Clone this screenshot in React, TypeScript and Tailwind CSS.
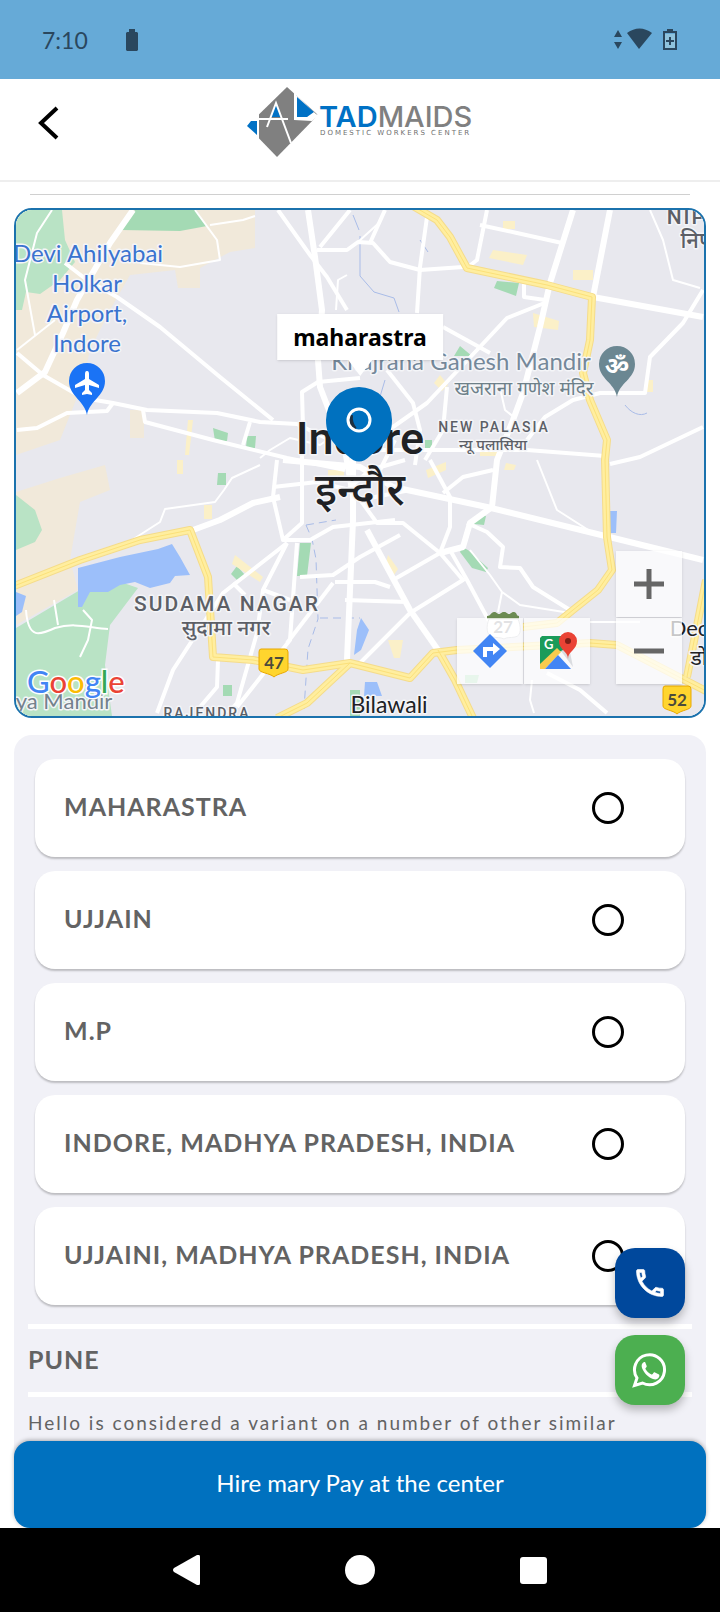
import { useState } from 'react';

const ADDRESSES = [
  'MAHARASTRA',
  'UJJAIN',
  'M.P',
  'INDORE, MADHYA PRADESH, INDIA',
  'UJJAINI, MADHYA PRADESH, INDIA',
];

const MAIN_ROADS = [
  'M133 210 110 243 77 300 63 333 45 372 17 393',
  'M308 210 315 257 322 310 318 360 320 387 330 413 345 450 352 490',
  'M573 210 550 283 540 327 523 393 513 420 497 460 492 507 470 523 463 547 440 553',
  'M610 210 593 297 703 317',
  'M283 460 360 467 393 487 487 507 593 533 703 560',
  'M367 530 410 610 438 650',
  'M353 440V520L347 660',
  'M193 530 220 520 253 503 280 497',
];

const ROADS = [
  'M65 263 87 280 117 297 160 327 220 377 273 420',
  'M17 353 43 375 83 398 113 403 147 410 217 413 260 422 297 424 330 440',
  'M17 430 37 428 67 413 107 411 113 403',
  'M143 410 145 422 213 440 287 458 345 470',
  'M250 422 243 445',
  'M278 210 310 255 327 277 347 310',
  'M350 210 320 247 M317 250H347L358 242 373 243 390 262 420 270 463 267',
  'M303 427 302 392 318 382 360 378',
  'M427 217 420 267 417 313',
  'M487 210 477 260 468 267',
  'M480 225 517 233 562 243',
  'M703 290 683 323 650 357 645 393 600 393 573 400 545 417 527 440',
  'M547 302 507 318 477 350 427 403 393 427 365 450',
  'M443 327 490 353 M524 284V297L545 300',
  'M703 427 640 457 610 464',
  'M447 387 443 430 425 460',
  'M387 370 413 403 420 430 415 465',
  'M360 450H527L605 456',
  'M430 460 450 497V527L440 553',
  'M493 470 463 477 443 493',
  'M360 663 410 613 463 580 440 553 403 523 377 523 353 490',
  'M393 580 440 553 M450 550 467 580 490 623',
  'M467 523 487 532 503 547 500 567 520 568 533 587 570 610',
  'M547 673 580 690 607 713',
  'M335 582H375L390 587 M345 600 407 602',
  'M277 460 273 497 283 540H310L333 527 395 520 M302 430V523L283 540',
  'M273 487 317 482 350 490',
  'M287 543 223 593 197 633 173 670 157 713',
  'M297 543 290 640 237 707',
  'M287 543 263 590 257 633 237 703 228 713',
  'M300 577 333 575 360 557 400 535 M333 583 287 643',
  'M218 660 217 687 200 707 M233 583 245 595',
  'M263 590 290 600 M347 490 370 470 405 460 M360 500 410 490',
  'M385 210 370 243 M335 427 350 455 M395 440 375 480',
];

const LANES = [
  'M52 210 37 233 25 280 35 335 M17 350 55 320',
  'M195 210 217 240 220 260 180 267 140 263 M210 225 243 220 255 216',
  'M347 275 338 280 336 310 M358 242 380 222',
  'M650 210 663 240 673 280 700 288',
  'M537 460 545 480 557 510 593 533',
  'M132 540 160 522 165 509 215 502 224 490 232 478 260 465',
  'M470 550 490 575 502 592 520 605 570 613 M502 592 498 612',
  'M340 405 342 430 320 445 290 438 270 450 260 458',
  'M500 388 505 410 515 418 M590 622H640',
  'M26 610C28 640 40 635 55 628 75 622 90 628 108 629 M54 600 58 625 M83 610 92 620 88 640 80 657',
  'M532 680 530 700 534 713',
];

const HIGHWAYS = [
  'M413 206 437 220 450 237 467 268 547 285 592 297 590 340 583 373 590 400 607 440 605 460 607 537 612 570 598 590 573 610 557 623 523 627',
  'M14 586 80 560 140 540 190 530 208 577 213 657 253 660 303 670 350 663 410 678 433 653 457 650 590 643 617 645 706 691',
  'M438 650 455 680 473 718',
  'M350 663 307 703 277 718',
  'M706 580 687 677',
];

// Drawn in a 688x506 window of the city tile
const CityMap = () => (
  <svg
    className="absolute inset-0 w-full h-full"
    viewBox="16 210 688 506"
    preserveAspectRatio="xMidYMid slice"
    fontFamily="'Noto Sans', 'Noto Sans Devanagari', sans-serif"
    role="img"
    aria-label="Map of Indore"
  >
    <path fill="#e8e8ee" d="M0 190h720v540H0z" />
    <path
      fill="#f1e9da"
      d="M16 210H255V248L230 252 200 268V288H178L175 270 130 275 110 310 90 350 82 385 60 440 16 455z"
    />
    <path fill="#f1e9da" d="M16 492 60 478 105 465 110 490 80 502 70 560 78 590 16 625z" />
    <path fill="#f1e9da" d="M130 410h14v28h-14z" />
    <path
      fill="#b9e3c5"
      d="M16 210H62L65 240 75 262 60 280 40 294 26 292 22 310 16 310zM16 495 35 510 42 530 35 542 16 550zM16 628 80 590 115 580 138 588 110 625 105 665 112 716H16z"
    />
    <path fill="#a4dab4" d="M135 210H196L207 226 180 231 121 230z" />
    <path fill="#f1e9da" d="M65 214H120L105 240 85 260 70 245z" />
    <path
      fill="#a4dab4"
      d="m213 428 15 5-1 8h-12zM247 436h9l-1 12h-9zM300 543h11l-4 33h-10zM237 566l8 9-8 5-6-6zM218 473h8v12h-9zM497 281l22 2-3 13-22-8zM476 515l10 1-2 9-10-1zM462 547l6 3 20 18-2 4-14-4-12-16zM223 685h9v11h-9zM425 440h7v8h-7zM460 346l12 10h-18zM350 690h10v26h-10zM465 675h14l-2 8h-12z"
    />
    <path
      fill="#9cbffa"
      d="M78 568 120 557 158 549 172 544 180 557 190 575 175 576 170 583 150 588 135 582 120 585 108 592 90 592 82 607H78zM16 592l10 4-4 16-6 4zM610 511h7l-1 22h-6zM361 618l8 12-8 20-7 5 3-25zM365 682h12l5 14h-18z"
    />
    <path
      fill="#fbf0c8"
      d="M493 250l34 5-4 10-34-7zM573 270h20v10h-20zM533 313l26 8-1 9-24-3zM503 221h12v8h-12zM188 420h5l-4 35h-4zM177 460h6v14h-6zM204 505h8v14h-8zM235 555l28 22-3 5-28-18zM388 555l10 14-4 6-8-12zM388 640h15l-3 18h-6zM440 375l8 10-6 6-8-8zM506 463l10 2-2 5h-10zM645 380h8v12h-8zM480 450h18v6h-18zM426 470l20-8v8l-18 8zM328 470h16v6h-16z"
    />
    <g fill="none" stroke="#a9bce8" strokeWidth="1">
      <path d="M360 236v40l14 16 20 6 5 14M353 215l6 15M420 240l8 12M385 380l-6 20M625 405c6 8 15 12 22 8" />
      <path strokeDasharray="8 5" d="M306 525l30-5M306 525l6 14 4 20 2 60-10 30-4 60M320 618h40" />
    </g>
    <g fill="none" stroke="#fff" strokeLinejoin="round">
      {LANES.map(d => <path key={d} d={d} strokeWidth="2" />)}
      {ROADS.map(d => <path key={d} d={d} strokeWidth="4" />)}
      {MAIN_ROADS.map(d => <path key={d} d={d} strokeWidth="6" />)}
    </g>
    <g fill="none" strokeLinejoin="round">
      {HIGHWAYS.map(d => <path key={d} d={d} stroke="#f5dc8a" strokeWidth="8" />)}
      {HIGHWAYS.map(d => <path key={d} d={d} stroke="#ffee9f" strokeWidth="6" />)}
      {HIGHWAYS.map(d => <path key={d} d={d} stroke="#fbe07a" strokeWidth="1" />)}
    </g>

    {/* Places */}
    <g textAnchor="middle" stroke="#f4f5f8" strokeWidth="3" strokeLinejoin="round" paintOrder="stroke">
      <g fill="#3a73cf" fontFamily="Lato, sans-serif" fontSize="24">
        <text x="88" y="262">Devi Ahilyabai</text>
        <text x="87" y="292">Holkar</text>
        <text x="87" y="322">Airport,</text>
        <text x="87" y="352">Indore</text>
      </g>
      <text x="461" y="370" fill="#74889a" fontFamily="Lato, sans-serif" fontSize="24">Khajrana Ganesh Mandir</text>
      <text x="524" y="395" fill="#6d8089" fontSize="19">खजराना गणेश मंदिर</text>
      <g fill="#5c5f66" fontWeight="500">
        <text x="494" y="432" fontFamily="Roboto, sans-serif" fontSize="14" letterSpacing="2">NEW PALASIA</text>
        <text x="493" y="450" fontSize="15">न्यू पलासिया</text>
        <text x="227" y="611" fontFamily="Roboto, sans-serif" fontSize="21" letterSpacing="2">SUDAMA NAGAR</text>
        <text x="226" y="635" fontSize="21">सुदामा नगर</text>
        <text x="207" y="718" fontFamily="Roboto, sans-serif" fontSize="14" letterSpacing="2">RAJENDRA</text>
        <text x="694" y="224" fontFamily="Roboto, sans-serif" fontSize="21" letterSpacing="2">NIPA</text>
        <text x="699" y="248" fontSize="22">निपा</text>
      </g>
      <g fill="#202124">
        <text x="360" y="454" fontFamily="Roboto, sans-serif" fontSize="45" fontWeight="500">Indore</text>
        <text x="360" y="505" fontSize="44" fontWeight="500">इन्दौर</text>
        <text x="389" y="713" fontFamily="Lato, sans-serif" fontSize="23">Bilawali</text>
        <text x="690" y="636" fontFamily="Lato, sans-serif" fontSize="22">Deo</text>
        <text x="706" y="665" fontSize="21">डोल</text>
      </g>
      <text x="64" y="709" fill="#73818c" fontFamily="Lato, sans-serif" fontSize="22">ya Mandir</text>
    </g>

    {/* Airport pin */}
    <path fill="#1a73f5" d="M87 415c-2-14-18-19-18-34a18 18 0 0 1 36 0c0 15-16 20-18 34z" />
    <path fill="#fff" d="M87 371c2 0 2 2 2 4v4l10 6v3l-10-3v5l3 3v2l-5-1-5 1v-2l3-3v-5l-10 3v-3l10-6v-4c0-2 0-4 2-4z" />

    {/* Temple pin */}
    <path fill="#6b8792" d="M617 397c-2-14-18-18-18-33a18 18 0 0 1 36 0c0 15-16 19-18 33z" />
    <text x="617" y="374" textAnchor="middle" fill="#fff" fontSize="24" fontWeight="700">ॐ</text>

    {/* Road shields */}
    <g stroke="#e9a800" strokeWidth="1">
      <path fill="#ffd52e" d="M261 649h24q3 0 3 3v17c0 4-10 4-14 8-4-4-15-4-15-8v-17q0-3 2-3z" />
      <path fill="#ffd52e" d="M665 686h23q3 0 3 3v17c0 4-10 4-14 8-4-4-14-4-14-8v-17q0-3 2-3z" />
    </g>
    <path fill="#fff" stroke="#b9bcc2" d="M489 619h29c3 7 4 17-3 18-5 1-8 0-11 2-4-2-7-1-11-2-7-1-7-11-4-18z" />
    <path fill="#6b8b52" d="M487 616c4 0 4-4 7-4s3 2 5 2 2-2 5-2 3 2 5 2 2-2 5-2 2 4 5 4v3h-32z" />
    <g textAnchor="middle" fontFamily="Lato, sans-serif" fontWeight="700" fontSize="17">
      <text x="274" y="669" fill="#4b4b3c">47</text>
      <text x="677" y="706" fill="#4b4b3c">52</text>
      <text x="503" y="633" fill="#8a8d92">27</text>
    </g>

    <text x="27" y="693" fontFamily="Lato, sans-serif" fontSize="31" fontWeight="500" stroke="#fff" strokeWidth="3" paintOrder="stroke">
      <tspan fill="#4285f4">G</tspan>
      <tspan fill="#ea4335">o</tspan>
      <tspan fill="#fbbc05">o</tspan>
      <tspan fill="#4285f4">g</tspan>
      <tspan fill="#34a853">l</tspan>
      <tspan fill="#ea4335">e</tspan>
    </text>

    {/* Selected location */}
    <path fill="#0071bf" d="M359 387a33 33 0 0 1 33 33c0 19-11 27-22 36q-11 11-22 0c-11-9-22-17-22-36a33 33 0 0 1 33-33z" />
    <path fill="none" stroke="#1c2f40" strokeWidth="4" d="M351 415q-1 8 4 14" />
    <circle cx="359" cy="420" r="11" fill="none" stroke="#fff" strokeWidth="3" />
  </svg>
);

const Logo = () => (
  <svg className="w-[260px] h-[90px]" viewBox="0 0 260 90" role="img" aria-label="Tadmaids">
    <path fill="#808080" d="M57 8 88 36 47 78 17 47z" />
    <path fill="#fff" d="M64 14 88 37 82 42 64 41zM15 47 29 34V60z" />
    <path fill="#0071c5" d="M67 18 84 33 77 38H67zM17 47 21 42H27V56zM40 38 46 26 51 38z" />
    <path fill="none" stroke="#fff" strokeWidth="2" d="M65 6V40H80L88 36M18 40H58M37 48 46 24 61 64M28 40V60" />
    <g fontFamily="Inter, sans-serif" fontSize="29">
      <text x="89" y="48" fontWeight="600" fill="#0071c5">
        TAD
        <tspan fill="#808080" fontWeight="500">MAIDS</tspan>
      </text>
    </g>
    <text x="90" y="56" fontFamily="'DejaVu Sans', sans-serif" fontSize="7" letterSpacing="2" fill="#707070">
      DOMESTIC WORKERS CENTER
    </text>
  </svg>
);

const StatusBar = () => (
  <div className="h-[79px] shrink-0 bg-[#66aad7] text-[#2a475e] px-[42px] flex items-center justify-between">
    <div className="flex items-center gap-[38px]">
      <span className="text-[23px] leading-8">7:10</span>
      <svg className="w-3 h-[22px]" viewBox="0 0 12 22" fill="currentColor">
        <path d="M3 0h6v3h2l1 1v17l-1 1H1l-1-1V4l1-1h2z" />
      </svg>
    </div>
    <svg className="w-[65px] h-6" viewBox="0 0 65 24" fill="currentColor">
      <path d="M5 2l4 7H1zM5 21l4-7H1z" />
      <path d="M14 5c8-6 17-6 25 0L26 21z" />
      <path fill="#8fc3dd" d="M52 6h10v14H52z" />
      <path fillRule="evenodd" d="M54 1h6v2h4v19H50V3h4zM52 5v15h10V5z" />
      <path d="M56 9h2v3h3v2h-3v3h-2v-3h-3v-2h3z" />
    </svg>
  </div>
);

const mapButton = 'w-[66px] h-[66px] bg-white/75 shadow-sm flex items-center justify-center';

export default function App() {
  const [selected, setSelected] = useState('');

  return (
    <div className="h-screen flex flex-col bg-white overflow-hidden font-['Lato','Noto_Sans',sans-serif]">
      <StatusBar />

      <header className="h-[103px] shrink-0 border-b-2 border-[#eeeeee] grid grid-cols-[1fr_260px_1fr] items-start">
        <button aria-label="Back" className="ml-[35px] mt-6 w-10 h-10">
          <svg className="w-10 h-10" viewBox="0 0 40 40" fill="none" stroke="#000" strokeWidth="4">
            <path d="M22 5 6 20l16 15" />
          </svg>
        </button>
        <Logo />
      </header>

      <main className="flex-1 min-h-0 overflow-hidden px-[14px]">
        <hr className="mx-4 mt-3 border-[#d0d0d0]" />

        {/* Map */}
        <section className="relative mt-[13px] h-[510px] rounded-[18px] border-2 border-[#1b72ad] overflow-hidden">
          <CityMap />
          <div className="absolute top-[104px] left-1/2 -translate-x-1/2 flex flex-col items-center">
            <div className="h-[46px] px-4 bg-white shadow flex items-center font-['Noto_Sans',sans-serif] font-bold text-[23px] text-black">
              maharastra
            </div>
            <svg className="w-6 h-4" viewBox="0 0 24 16" fill="#fff">
              <path d="M0 0h24L12 16z" />
            </svg>
          </div>
          <div className="absolute right-[22px] bottom-8 flex items-end gap-[26px]">
            <div className="flex gap-[1px]">
              <button aria-label="Directions" className={mapButton}>
                <svg className="w-9 h-9" viewBox="0 0 36 36">
                  <path fill="#4285f4" d="M18 1 35 18 18 35 1 18z" />
                  <path fill="#fff" d="M11 24V14h10v-4l7 6-7 6v-4h-6v6z" />
                </svg>
              </button>
              <button aria-label="Open in Google Maps" className={mapButton}>
                <svg className="w-10 h-10" viewBox="0 0 40 40">
                  <path fill="#1a9b5a" d="M5 5h27v16L20 20 3 35V7z" />
                  <path fill="#f7cb4d" d="M3 33 20 17l4 4L8 38H3z" />
                  <path fill="#4285f4" d="M8 38 21 24 34 38z" />
                  <path fill="#dadce0" d="M24 20 32 16l4 20z" />
                  <path fill="#ea4335" d="M31 28c0-8-9-9-9-18a9 9 0 0 1 18 0c0 9-9 10-9 18z" />
                  <circle cx="31" cy="10" r="3" fill="#7e1f16" />
                  <text x="7" y="18" fill="#fff" fontFamily="Lato, sans-serif" fontSize="13" fontWeight="700">G</text>
                </svg>
              </button>
            </div>
            <div className="flex flex-col gap-[1px]">
              <button aria-label="Zoom in" className={mapButton}>
                <svg className="w-[30px] h-[30px]" viewBox="0 0 30 30" stroke="#666" strokeWidth="5">
                  <path d="M0 15h30M15 0v30" />
                </svg>
              </button>
              <button aria-label="Zoom out" className={mapButton}>
                <svg className="w-[30px] h-[30px]" viewBox="0 0 30 30" stroke="#666" strokeWidth="5">
                  <path d="M0 15h30" />
                </svg>
              </button>
            </div>
          </div>
        </section>

        {/* Addresses */}
        <section className="mt-[17px] rounded-t-[18px] bg-[#f1f1f7] pt-6 pb-10 px-[14px] text-[#636363]">
          <div className="flex flex-col gap-[14px] px-[7px]">
            {ADDRESSES.map(address => (
              <label
                key={address}
                className="h-[98px] rounded-[20px] bg-white shadow-[0_2px_2px_rgba(0,0,0,0.22)] pl-[29px] pr-[61px] flex items-center justify-between"
              >
                <span className="pb-1 text-[25px] leading-8 font-bold tracking-[1px]">{address}</span>
                <input
                  type="radio"
                  name="address"
                  value={address}
                  checked={selected === address}
                  onChange={() => setSelected(address)}
                  className="appearance-none w-8 h-8 rounded-full border-[3px] border-black checked:border-[10px]"
                />
              </label>
            ))}
          </div>
          <h2 className="mt-[19px] h-[73px] border-y-[5px] border-white pb-1 flex items-center text-[25px] leading-8 font-bold tracking-[1px]">
            PUNE
          </h2>
          <p className="mt-3 text-[19px] leading-7 tracking-[2px]">
            Hello is considered a variant on a number of other similar
          </p>
        </section>
      </main>

      <footer className="relative shrink-0 -mt-4">
        <div className="px-[14px]">
          <button className="w-full h-[87px] rounded-2xl bg-[#0071bf] text-white pb-1 text-[24px] leading-8 shadow-[0_-1px_4px_rgba(0,0,0,0.3)]">
            Hire mary Pay at the center
          </button>
        </div>
        <div className="absolute right-[35px] bottom-[207px] flex flex-col gap-[17px] text-white">
          <button
            aria-label="Call"
            className="w-[70px] h-[70px] rounded-[20px] bg-[#00489c] shadow-[0_5px_8px_rgba(0,0,0,0.25)] flex items-center justify-center"
          >
            <svg className="w-9 h-9" viewBox="0 0 24 24" fill="currentColor" stroke="currentColor" strokeWidth="0.4">
              <path d="M6.540 5c.06.89.21 1.760.45 2.590l-1.200 1.200c-.41-1.200-.67-2.470-.76-3.790h1.510m9.860 12.020c.85.24 1.720.39 2.600.45v1.490c-1.320-.09-2.590-.35-3.800-.75l1.200-1.190M7.500 3H4c-.55 0-1 .45-1 1 0 9.390 7.610 17 17 17 .55 0 1-.45 1-1v-3.490c0-.55-.45-1-1-1-1.240 0-2.450-.2-3.570-.57-.1-.04-.21-.05-.31-.05-.26 0-.51.1-.71.29l-2.200 2.200c-2.830-1.450-5.150-3.760-6.590-6.590l2.200-2.200c.28-.28.36-.67.25-1.020C8.700 6.450 8.500 5.250 8.500 4c0-.55-.45-1-1-1z" />
            </svg>
          </button>
          <button
            aria-label="WhatsApp"
            className="w-[70px] h-[70px] rounded-[20px] bg-[#4caf50] shadow-[0_5px_8px_rgba(0,0,0,0.25)] flex items-center justify-center"
          >
            <svg className="w-9 h-9" viewBox="0 0 36 36">
              <path fill="none" stroke="#fff" strokeWidth="3" d="M2.500 33.500 5 26A15 15 0 1 1 10.500 31z" />
              <path
                fill="#fff"
                d="M12 10c-2 1-3 3-2 6 2 5 6 9 11 11 3 1 5 0 6-2 .5-1 .5-2 0-2.500l-4-2c-1-.4-1.300 0-2.300 1.500-.4.500-1 .5-1.600.2-2.500-1-4.500-3-5.600-5.200-.3-.6.200-1 1-2 .4-.5.3-1 0-1.500L13.200 10.300c-.3-.5-.7-.5-1.200-.3z"
              />
            </svg>
          </button>
        </div>
        <nav className="h-[84px] bg-black px-[100px] grid grid-cols-3 justify-items-center items-center text-white">
          <button aria-label="Back">
            <svg className="w-7 h-[30px]" viewBox="0 0 28 30" fill="currentColor">
              <path d="M24 0q3-1 3 2v26q0 3-3 2L1 17q-2-2 0-4z" />
            </svg>
          </button>
          <button aria-label="Home" className="w-[30px] h-[30px] rounded-full bg-white" />
          <button aria-label="Recent apps" className="w-[27px] h-[27px] rounded-[3px] bg-white" />
        </nav>
      </footer>
    </div>
  );
}
